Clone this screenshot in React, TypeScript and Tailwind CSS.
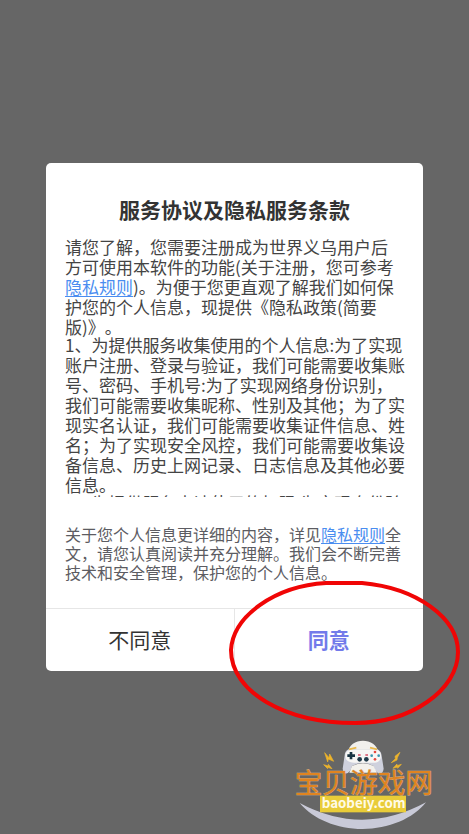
const fontStack =
  "font-['Noto_Sans_CJK_SC','Noto_Sans',sans-serif] [text-spacing-trim:space-all]";

const policyItems = [
  "1、为提供服务收集使用的个人信息:为了实现账户注册、登录与验证，我们可能需要收集账号、密码、手机号:为了实现网络身份识别，我们可能需要收集昵称、性别及其他；为了实现实名认证，我们可能需要收集证件信息、姓名；为了实现安全风控，我们可能需要收集设备信息、历史上网记录、日志信息及其他必要信息。",
  "2、为提供服务申请使用的权限:为实现身份验",
];

function PrivacyLink() {
  return (
    <a href="#privacy" className="text-[#4a8df0] underline underline-offset-2">
      隐私规则
    </a>
  );
}

function HighlightRing() {
  return (
    <svg
      className="absolute -top-[31px] -left-[8px] w-[234px] h-[148px] max-w-none pointer-events-none"
      viewBox="0 0 234 148"
      fill="none"
      aria-hidden="true"
    >
      <path
        d="M99 5H135C190 10 231 40 231 74C231 112 184 145 128 145C58 145 4 114 4 72C6 38 48 8 99 5Z"
        stroke="#f00505"
        strokeWidth="4"
        strokeLinejoin="round"
      />
    </svg>
  );
}

function SiteLogo() {
  return (
    <svg
      className="absolute bottom-0 right-[19px] w-[170px] h-[104px] pointer-events-none"
      viewBox="0 0 510 312"
      role="img"
      aria-label="宝贝游戏网"
    >
      {/* Smile */}
      <path d="M59 219Q248 320 438 217C400 266 325 297 248 297S100 268 59 219Z" fill="#c9cad8" />

      {/* Gamepad */}
      <path d="M204 68C207 20 290 20 295 68Z" fill="#f1f0ed" />
      <path
        d="M194 76C196 53 219 55 230 59H269C283 54 302 55 305 77L311 116C308 139 287 134 281 108Q248 90 216 108C210 133 191 139 188 116Z"
        fill="#cfd1dd"
      />
      <path
        d="M196 76C198 56 219 57 230 60H269C281 56 302 57 303 77C303 94 290 100 274 98H225C207 99 195 91 196 76Z"
        fill="#f7f6f4"
      />
      <path d="M207 58L229 53M270 53L291 58" stroke="#e7b84d" strokeWidth="5" />
      <path d="M216 108Q249 92 281 108L291 128H208Z" fill="#f3f1ec" />
      <path d="M213 66V88M202 77H225" stroke="#183442" strokeWidth="8" />
      <circle cx="285" cy="66" r="4" fill="#e5483d" />
      <circle cx="285" cy="88" r="4" fill="#e5483d" />
      <circle cx="275" cy="77" r="4" fill="#3996ae" />
      <circle cx="296" cy="77" r="4" fill="#3996ae" />
      <circle cx="239" cy="88" r="7" fill="#203b4a" />
      <circle cx="259" cy="88" r="7" fill="#203b4a" />
      <path d="M234 75H242M256 75H264" stroke="#d94d66" strokeWidth="4" />

      {/* Sparks */}
      <g fill="#edb42c" stroke="#edb42c" strokeWidth="2">
        <path d="M134 68L147 83L149 72L161 94L145 87L143 96Z" />
        <path d="M131 104L145 108V103L156 116L143 112V116Z" />
        <path d="M360 67L345 79L346 86L334 98L351 90L352 83Z" />
        <path d="M364 103L351 107V102L339 115L353 111V115Z" />
      </g>

      <text
        x="44"
        y="188"
        fontSize="83"
        fontWeight="400"
        fill="#e08420"
        stroke="#d8b48a"
        strokeWidth="2"
        paintOrder="stroke"
      >
        宝贝游戏网
      </text>

      <rect x="120" y="197" width="258" height="50" fill="#e9cc38" />
      <text
        x="251"
        y="235"
        fontSize="40"
        fontWeight="600"
        textAnchor="middle"
        fill="#fffbe6"
        className="font-['Noto_Sans_CJK_SC',sans-serif]"
      >
        baobeiy.com
      </text>
    </svg>
  );
}

export default function App() {
  return (
    <div
      className={`relative min-h-screen flex items-center justify-center overflow-hidden bg-[#666666] px-[46px] ${fontStack}`}
    >
      <SiteLogo />

      <section
        role="dialog"
        aria-labelledby="dialog-title"
        className="relative w-full rounded-[5px] bg-white pt-[32px]"
      >
        <h1
          id="dialog-title"
          className="text-center text-[21px] leading-[28px] font-bold text-[#333333]"
        >
          服务协议及隐私服务条款
        </h1>

        {/* Scrollable terms */}
        <div className="mt-[14px] h-[260px] overflow-y-auto [scrollbar-width:none] pl-[19px] pr-4 text-[17px] leading-[20px] text-[#444444]">
          <p>
            请您了解，您需要注册成为世界义乌用户后
            <br />
            方可使用本软件的功能(关于注册，您可参考
            <PrivacyLink />
            )。为便于您更直观了解我们如何保护您的个人信息，现提供《隐私政策(简要版)》。
          </p>
          {policyItems.map((item) => (
            <p key={item} className="-mt-0.5">
              {item}
            </p>
          ))}
        </div>

        <p className="mt-[28px] mb-[26px] pl-[19px] pr-4 text-[16px] leading-[19px] text-[#5c5c62]">
          关于您个人信息更详细的内容，详见
          <PrivacyLink />
          全文，请您认真阅读并充分理解。我们会不断完善技术和安全管理，保护您的个人信息。
        </p>

        <div className="grid grid-cols-2 border-t border-[#e6e6e6] text-[21px]">
          <button type="button" className="h-[62px] border-r border-[#e6e6e6] text-[#333333]">
            不同意
          </button>
          <div className="relative">
            <button type="button" className="w-full h-[62px] font-bold text-[#737bea]">
              同意
            </button>
            <HighlightRing />
          </div>
        </div>
      </section>
    </div>
  );
}
